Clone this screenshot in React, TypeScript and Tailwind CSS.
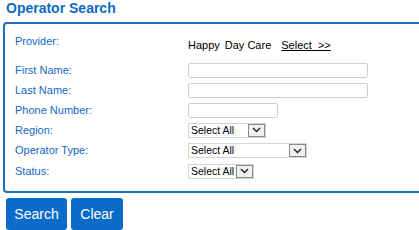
import React from "react";

const font = { fontFamily: '"Liberation Sans", Arial, sans-serif' };

function Chevron() {
  return (
    <svg width="9" height="6" viewBox="0 0 9 6" className="block">
      <path d="M1 1 L4.5 4.5 L8 1" fill="none" stroke="#222" strokeWidth="1.4" />
    </svg>
  );
}

function FakeSelect({ width }: { width: string }) {
  return (
    <div className={`flex h-[15px] ${width} items-stretch border border-[#d4d4d4] bg-white`}>
      <div className="flex min-w-0 flex-1 items-center whitespace-nowrap pl-[2px] text-[10.5px] leading-none text-black">Select All</div>
      <div className="flex w-[17px] flex-none items-center justify-center border border-[#8a8a8a] bg-[#f0f0f0]">
        <Chevron />
      </div>
    </div>
  );
}

function Input({ width }: { width: string }) {
  return <div className={`h-[15px] ${width} rounded-[2px] border border-[#cfcfcf] bg-white`} />;
}

function Row({ label, children, h = "h-[20px]" }: { label: string; children: React.ReactNode; h?: string }) {
  return (
    <div className={`flex ${h} items-center`}>
      <div className="w-[173px] text-[11px] leading-[13px] text-[#1268c4]">{label}</div>
      <div className="flex items-center">{children}</div>
    </div>
  );
}

export default function App() {
  return (
    <div className="h-[230px] w-[419px] overflow-hidden bg-white" style={font}>
      <div className="pl-[6px] pt-[0px] text-[14px] font-bold leading-[16px] text-[#0d6ac7]">Operator Search</div>
      <div className="ml-[3px] mt-[6px] w-[440px] rounded-[4px] border-2 border-[#1e6fc0] pb-[10px] pl-[10px] pt-[11px]">
        <div className="flex h-[25px] items-start">
          <div className="w-[173px] text-[11px] leading-[13px] text-[#1268c4]">Provider:</div>
          <div className="mt-[4px] flex text-[11px] leading-[13px] text-black">
            <span>Happy</span>
            <span className="ml-[5px]">Day Care</span>
            <span className="ml-[10px] whitespace-pre underline">Select  &gt;&gt;</span>
          </div>
        </div>
        <Row label="First Name:"><Input width="w-[180px]" /></Row>
        <Row label="Last Name:"><Input width="w-[180px]" /></Row>
        <Row label="Phone Number:"><Input width="w-[90px]" /></Row>
        <Row label="Region:"><FakeSelect width="w-[78px]" /></Row>
        <Row label="Operator Type:" h="h-[21px]"><FakeSelect width="w-[119px]" /></Row>
        <Row label="Status:"><FakeSelect width="w-[66px]" /></Row>
      </div>
      <div className="ml-[6px] mt-[5px] flex gap-[4px]">
        <button className="h-[32px] w-[61px] rounded-[3px] bg-[#0b6bc8] text-[14px] text-white">Search</button>
        <button className="h-[32px] w-[52px] rounded-[3px] bg-[#0b6bc8] text-[14px] text-white">Clear</button>
      </div>
    </div>
  );
}
